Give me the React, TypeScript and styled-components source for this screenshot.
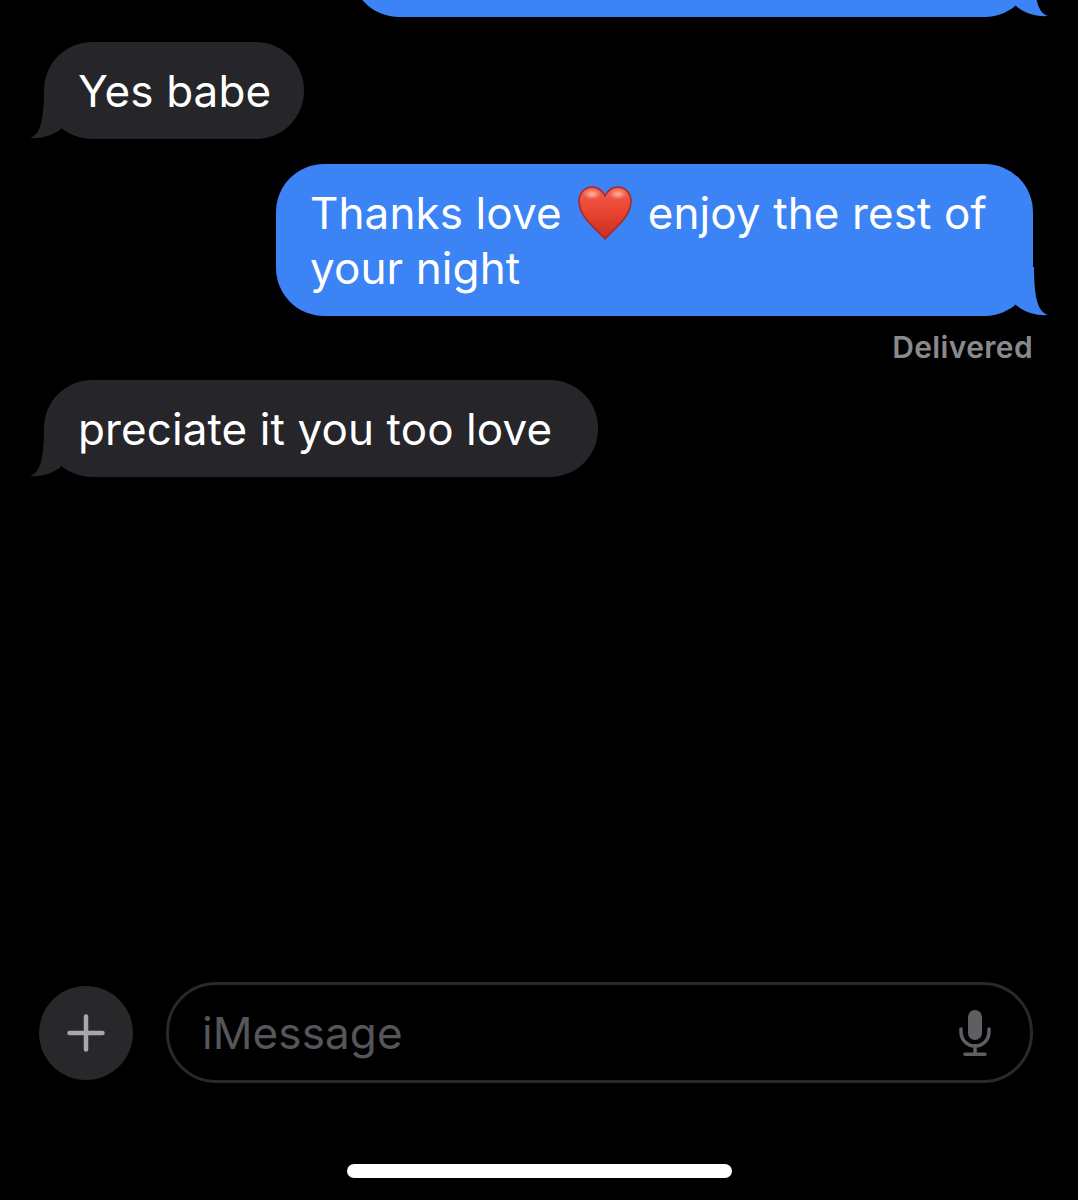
import React from 'react'
import styled, { createGlobalStyle } from 'styled-components'

const GlobalStyle = createGlobalStyle`
  html, body {
    margin: 0;
    padding: 0;
    background: #000;
  }
  * {
    box-sizing: border-box;
  }
`

const Screen = styled.div`
  width: 1078px;
  height: 1200px;
  background: #000;
  display: flex;
  flex-direction: column;
  overflow: hidden;
  font-family: Inter, "Liberation Sans", sans-serif;
`

const Thread = styled.div`
  display: flex;
  flex-direction: column;
  padding: 0 45px 0 44px;
`

const Bubble = styled.div<{ $mine?: boolean; $top?: number; $endPad?: number }>`
  position: relative;
  align-self: ${p => (p.$mine ? 'flex-end' : 'flex-start')};
  max-width: 757px;
  min-height: 97px;
  margin-top: ${p => p.$top ?? 0}px;
  padding: 22px ${p => p.$endPad ?? 33}px 20px 34px;
  border-radius: 48px;
  background: ${p => (p.$mine ? '#3c83f6' : '#26252a')};
  color: #fff;
  font-size: 44px;
  line-height: 55px;
  letter-spacing: 0.1px;
`

const TopBubble = styled(Bubble)`
  width: 682px;
`

const WideBubble = styled(Bubble)`
  width: 757px;
`

const Tail = styled.svg<{ $mine?: boolean }>`
  position: absolute;
  bottom: 0;
  width: 50px;
  height: 50px;
  ${p => (p.$mine ? 'right: -14.5px; transform: scaleX(-1);' : 'left: -14px;')}
`

const Heart = styled.svg`
  display: inline-block;
  width: 54px;
  height: 54px;
  margin: -14px 3px -6px 4px;
  vertical-align: middle;
`

const Status = styled.div`
  align-self: flex-end;
  margin-top: 14px;
  color: #8a8a8e;
  font-size: 30px;
  font-weight: 600;
  line-height: 35px;
  letter-spacing: 0.35px;
`

const Composer = styled.div`
  display: flex;
  align-items: center;
  gap: 33px;
  margin-top: auto;
  padding: 0 45px 0 39px;
`

const AddButton = styled.div`
  flex: none;
  display: flex;
  align-items: center;
  justify-content: center;
  width: 94px;
  height: 94px;
  border-radius: 50%;
  background: #28282b;
`

const InputField = styled.div`
  flex: 1;
  display: flex;
  align-items: center;
  justify-content: space-between;
  height: 101px;
  padding: 0 39px 0 33px;
  border: 3px solid #29292b;
  border-radius: 50px;
`

const Placeholder = styled.span`
  color: #55555a;
  font-size: 44px;
  letter-spacing: 0.1px;
`

const HomeBarRow = styled.div`
  display: flex;
  justify-content: center;
  padding: 81px 0 22px;
`

const HomeBar = styled.div`
  width: 385px;
  height: 14px;
  border-radius: 7px;
  background: #fff;
`

const BubbleTail = ({ mine }: { mine?: boolean }) => (
  <Tail $mine={mine} viewBox="0 -10 50 50">
    <path
      d="M0 39 C10 36 14 22 14 -9 L32 -9 L32 29 C24 36 12 40 0 39 Z"
      fill={mine ? '#3c83f6' : '#26252a'}
    />
  </Tail>
)

const HeartIcon = () => (
  <Heart viewBox="0 0 54 54">
    <defs>
      <linearGradient id="heartFill" x1="0" y1="0" x2="0" y2="1">
        <stop offset="0" stopColor="#f2604c" />
        <stop offset="0.45" stopColor="#ea4532" />
        <stop offset="1" stopColor="#c92d22" />
      </linearGradient>
      <radialGradient id="heartShine" cx="0.5" cy="0.5" r="0.5">
        <stop offset="0" stopColor="#ffc4b4" stopOpacity="0.85" />
        <stop offset="1" stopColor="#ffc4b4" stopOpacity="0" />
      </radialGradient>
    </defs>
    <path
      d="M27 53 C20 44 1 32 1 15 C1 7 7 1 14 1 C20 1 24 4 27 10 C30 4 34 1 40 1 C47 1 53 7 53 15 C53 32 34 44 27 53 Z"
      fill="url(#heartFill)"
      stroke="#a52c24"
      strokeWidth="1.6"
    />
    <ellipse cx="14" cy="8" rx="9" ry="5.5" fill="url(#heartShine)" />
    <ellipse cx="40" cy="8" rx="9" ry="5.5" fill="url(#heartShine)" />
  </Heart>
)

const PlusIcon = () => (
  <svg width="38" height="38" viewBox="0 0 38 38" fill="none" stroke="#a8a8ab" strokeWidth="4.5" strokeLinecap="round">
    <path d="M19 2.5 V35.5 M2.5 19 H35.5" />
  </svg>
)

const MicIcon = () => (
  <svg width="32" height="46" viewBox="0 0 32 46" fill="none" stroke="#5f5f63" strokeWidth="3.5" strokeLinecap="round">
    <rect x="9" y="0" width="14" height="30" rx="7" fill="#5f5f63" stroke="none" />
    <path d="M2 19 V22 A14 14 0 0 0 30 22 V19" />
    <path d="M16 36 V44 M6 44.2 H26" />
  </svg>
)

export default function App() {
  return (
    <Screen>
      <GlobalStyle />
      <Thread>
        <TopBubble $mine $top={-80}>
          <BubbleTail mine />
        </TopBubble>
        <Bubble $top={25}>
          Yes babe
          <BubbleTail />
        </Bubble>
        <WideBubble $mine $top={25}>
          Thanks love <HeartIcon /> enjoy the rest of
          <br />
          your night
          <BubbleTail mine />
        </WideBubble>
        <Status>Delivered</Status>
        <Bubble $top={15} $endPad={46}>
          preciate it you too love
          <BubbleTail />
        </Bubble>
      </Thread>
      <Composer>
        <AddButton>
          <PlusIcon />
        </AddButton>
        <InputField>
          <Placeholder>iMessage</Placeholder>
          <MicIcon />
        </InputField>
      </Composer>
      <HomeBarRow>
        <HomeBar />
      </HomeBarRow>
    </Screen>
  )
}
